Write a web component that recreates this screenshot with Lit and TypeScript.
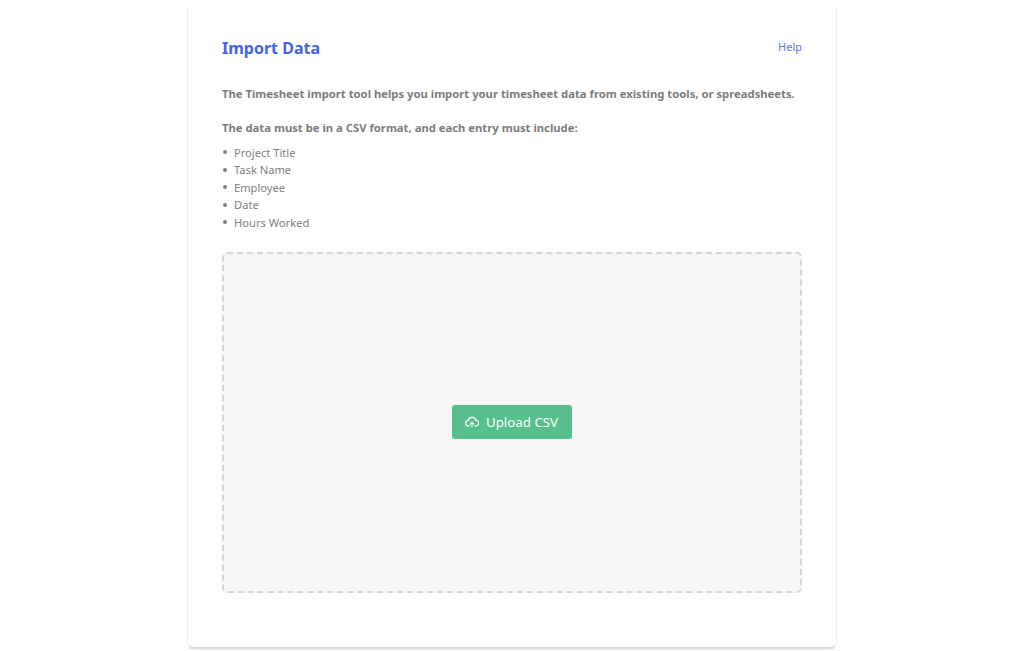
import { LitElement, html, css } from "lit";
import { customElement } from "lit/decorators.js";

@customElement("app-root")
export class AppRoot extends LitElement {
  static styles = css`
    :host { display: block; height: 651px; background: #fff; font-family: "Noto Sans", "Open Sans", sans-serif; overflow: hidden; }
    .card { box-sizing: border-box; width: 648px; height: 639px; margin: 8px auto 0; padding: 25px 34px 0; background: #fff; border-radius: 0 0 6px 6px; box-shadow: 1px 0 0 #eeeeee, -1px 0 0 #eeeeee, 0 1px 1px rgba(0,0,0,.05), 0 3px 0 #e3e3e3; }
    .head { display: flex; justify-content: space-between; align-items: center; height: 30px; }
    h1 { margin: 0; font-size: 16px; font-weight: 700; color: #4364e8; line-height: 30px; }
    a { color: #5a74ee; font-size: 11px; text-decoration: none; line-height: 15px; margin-bottom: 3px; }
    p { margin: 0; font-size: 11.27px; font-weight: 700; color: #7c7c7c; line-height: 18px; white-space: nowrap; }
    .intro { margin-top: 22px; }
    .req { margin-top: 16px; }
    ul { margin: 6.6px 0 0; padding: 0; list-style: none; font-size: 11.15px; line-height: 17.5px; color: #808080; }
    li { display: flex; align-items: center; gap: 7px; padding-left: 1px; }
    li::before { content: ""; width: 4px; height: 4px; border-radius: 50%; background: #808080; flex: none; }
    .drop { box-sizing: border-box; margin-top: 20.6px; height: 341px; background: #f6f6f6; border: 2px dashed #d6d6d6; border-radius: 5px; display: flex; align-items: center; justify-content: center; }
    button { display: flex; align-items: center; gap: 7px; height: 34px; width: 120px; justify-content: center; border: 0; padding: 0 1px 0 0; background: #56bf8c; color: #fff; border-radius: 3px; font: inherit; font-size: 13.3px; }
    svg { width: 14px; height: 14px; fill: none; stroke: #fff; stroke-width: 2; stroke-linecap: round; stroke-linejoin: round; }
  `;
  render() {
    return html`<div class="card">
      <div class="head"><h1>Import Data</h1><a href="#">Help</a></div>
      <p class="intro">The Timesheet import tool helps you import your timesheet data from existing tools, or spreadsheets.</p>
      <p class="req">The data must be in a CSV format, and each entry must include:</p>
      <ul><li>Project Title</li><li>Task Name</li><li>Employee</li><li>Date</li><li>Hours Worked</li></ul>
      <div class="drop"><button><svg viewBox="0 0 24 24"><path d="M7 19H6a4.8 4.8 0 0 1-.6-9.56A6.8 6.8 0 0 1 18.4 8.6a5.2 5.2 0 0 1-.4 10.4h-1"/><path d="M12 20v-7M8.6 15.6 12 12.4l3.4 3.2"/></svg>Upload CSV</button></div>
    </div>`;
  }
}
